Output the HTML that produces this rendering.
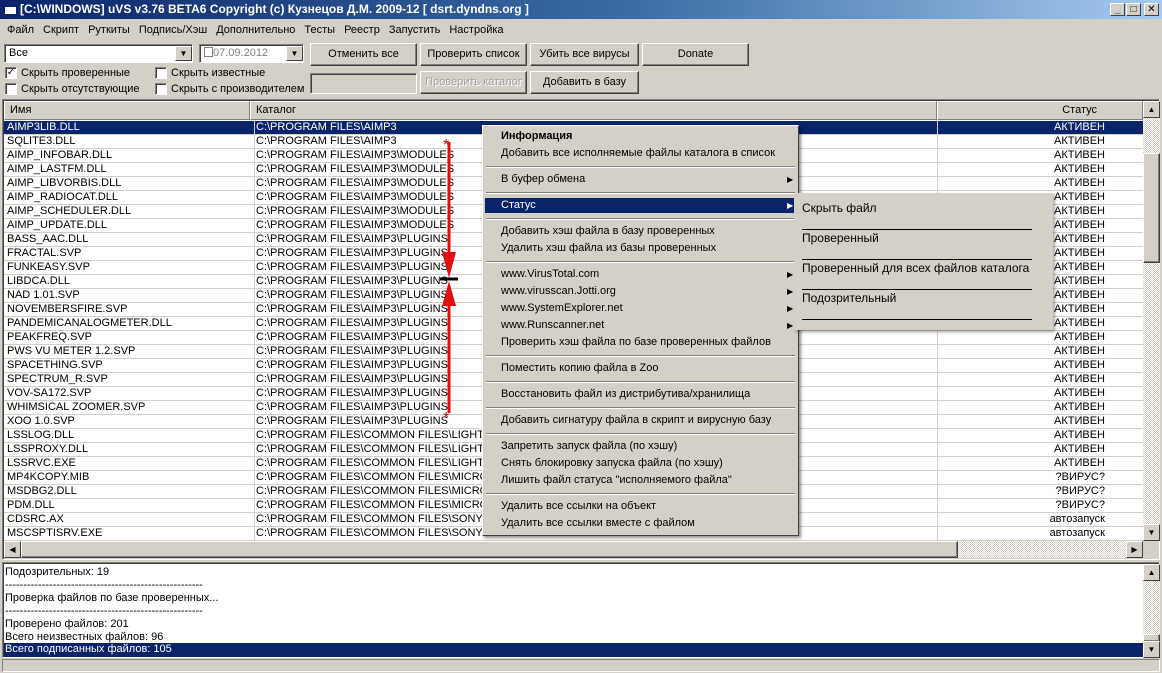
<!DOCTYPE html>
<html><head><meta charset="utf-8"><style>
*{box-sizing:border-box;margin:0;padding:0}
body{width:1162px;height:673px;overflow:hidden;background:#d4d0c8;font-family:"Liberation Sans","DejaVu Sans",sans-serif;font-size:11px;color:#000;position:relative}
.a{position:absolute}
.title{left:0;top:0;width:1162px;height:19px;background:linear-gradient(90deg,#0a246a 0%,#3a6ea5 55%,#a6caf0 100%);color:#fff;font-weight:bold;font-size:12px;line-height:19px;padding-left:20px;white-space:nowrap}
.tb{top:3px;width:15px;height:13px;background:#d4d0c8;border:1px solid;border-color:#fff #404040 #404040 #fff;font-size:10px;line-height:11px;text-align:center;font-weight:bold;color:#000}
.menu span{margin-right:9px}
.btn{height:23px;background:#d4d0c8;border:1px solid;border-color:#fff #404040 #404040 #fff;box-shadow:inset -1px -1px #808080;text-align:center;line-height:21px;white-space:nowrap}
.sunk{border:1px solid;border-color:#808080 #fff #fff #808080;box-shadow:inset 1px 1px #404040;background:#fff}
.cb{width:12px;height:12px;background:#fff;border:1px solid;border-color:#808080 #fff #fff #808080;box-shadow:inset 1px 1px #404040;font-size:10px;line-height:10px;text-align:center}
.grid{left:4px;top:101px;width:1139px;height:440px;background:#fff;overflow:hidden}
.hdr{position:absolute;top:0;height:19px;background:#d4d0c8;border:1px solid;border-color:#fff #808080 #808080 #fff;line-height:17px;padding-left:5px}
.row{position:absolute;left:0;width:1139px;height:14px;border-bottom:1px solid #d4d0c8;line-height:13px;white-space:nowrap}
.row div{position:absolute;top:0;height:14px;overflow:hidden}
.c1{left:3px;width:243px}.c2{left:250px;width:680px;border-left:1px solid #d4d0c8;padding-left:1px}.c3{left:933px;width:206px;border-left:1px solid #d4d0c8;text-align:right;padding-right:38px}
.sel{background:#0a246a;color:#fff}
.sb{background:repeating-conic-gradient(#d4d0c8 0 25%,#fff 0 50%) 0 0/2px 2px}
.arr{width:17px;height:17px;background:#d4d0c8;border:1px solid;border-color:#fff #404040 #404040 #fff;font-size:8px;line-height:15px;text-align:center}
.cm{left:482px;top:125px;width:317px;height:411px;background:#d4d0c8;border:1px solid;border-color:#fff #404040 #404040 #fff;box-shadow:2px 2px 3px rgba(0,0,0,.45)}
.mi{position:absolute;left:18px;white-space:nowrap;height:17px;line-height:17px}
.sep{position:absolute;left:3px;width:309px;height:2px;border-top:1px solid #808080;border-bottom:1px solid #fff}
.tri{position:absolute;left:304px;font-size:8px}
.sub{left:794px;top:193px;width:259px;height:137px;background:#d4d0c8;box-shadow:2px 2px 3px rgba(0,0,0,.35)}
.sub .mi{left:8px;font-size:12px}
.sub .ln{position:absolute;left:8px;width:230px;height:1px;background:#000}
</style></head><body>
<div class="a title"><span class="a" style="left:4px;top:4px;width:13px;height:11px;background:#fff;border:1px solid #0a246a;border-top:3px solid #0a246a"></span>[C:\WINDOWS] uVS v3.76 BETA6 Copyright (c) Кузнецов Д.М. 2009-12 [ dsrt.dyndns.org ]</div>
<div class="a tb" style="left:1110px">_</div><div class="a tb" style="left:1126px">□</div><div class="a tb" style="left:1144px">✕</div>
<div class="a menu" style="left:7px;top:24px;white-space:nowrap"><span>Файл</span><span>Скрипт</span><span>Руткиты</span><span>Подпись/Хэш</span><span>Дополнительно</span><span>Тесты</span><span>Реестр</span><span>Запустить</span><span>Настройка</span></div>
<div class="a sunk" style="left:4px;top:44px;width:189px;height:19px;padding:2px 4px">Все</div>
<div class="a arr" style="left:175px;top:46px;height:15px;line-height:13px">▼</div>
<div class="a sunk" style="left:199px;top:44px;width:105px;height:19px;padding:2px 4px;color:#808080"><span style="display:inline-block;width:9px;height:10px;border:1px solid #808080;vertical-align:-1px"></span>07.09.2012</div>
<div class="a arr" style="left:286px;top:46px;height:15px;line-height:13px">▼</div>
<div class="a btn" style="left:310px;top:43px;width:107px">Отменить все</div>
<div class="a btn" style="left:420px;top:43px;width:107px">Проверить список</div>
<div class="a btn" style="left:530px;top:43px;width:109px">Убить все вирусы</div>
<div class="a btn" style="left:642px;top:43px;width:107px">Donate</div>
<div class="a cb" style="left:5px;top:67px">✓</div><div class="a" style="left:21px;top:67px">Скрыть проверенные</div>
<div class="a cb" style="left:155px;top:67px"></div><div class="a" style="left:171px;top:67px">Скрыть известные</div>
<div class="a cb" style="left:5px;top:83px"></div><div class="a" style="left:21px;top:83px">Скрыть отсутствующие</div>
<div class="a cb" style="left:155px;top:83px"></div><div class="a" style="left:171px;top:83px">Скрыть с производителем</div>
<div class="a" style="left:310px;top:73px;width:107px;height:21px;border:1px solid;border-color:#808080 #fff #fff #808080;box-shadow:inset 1px 1px #404040"></div>
<div class="a btn" style="left:420px;top:71px;width:107px;color:#a0a0a0;text-shadow:1px 1px #fff">Проверить каталог</div>
<div class="a btn" style="left:530px;top:71px;width:109px">Добавить в базу</div>
<div class="a" style="left:2px;top:99px;width:1158px;height:461px;border:1px solid;border-color:#808080 #fff #fff #808080;box-shadow:inset 1px 1px #404040"></div>
<div class="a grid">
<div class="hdr" style="left:0;width:246px">Имя</div>
<div class="hdr" style="left:246px;width:687px">Каталог</div>
<div class="hdr" style="left:933px;width:206px;text-align:right;padding-right:45px">Статус</div>
<div style="position:absolute;left:0;top:1px;width:1139px;height:440px">
<div class="row sel" style="top:19px"><div class="c1">AIMP3LIB.DLL</div><div class="c2">C:\PROGRAM FILES\AIMP3</div><div class="c3">АКТИВЕН</div></div>
<div class="row" style="top:33px"><div class="c1">SQLITE3.DLL</div><div class="c2">C:\PROGRAM FILES\AIMP3</div><div class="c3">АКТИВЕН</div></div>
<div class="row" style="top:47px"><div class="c1">AIMP_INFOBAR.DLL</div><div class="c2">C:\PROGRAM FILES\AIMP3\MODULES</div><div class="c3">АКТИВЕН</div></div>
<div class="row" style="top:61px"><div class="c1">AIMP_LASTFM.DLL</div><div class="c2">C:\PROGRAM FILES\AIMP3\MODULES</div><div class="c3">АКТИВЕН</div></div>
<div class="row" style="top:75px"><div class="c1">AIMP_LIBVORBIS.DLL</div><div class="c2">C:\PROGRAM FILES\AIMP3\MODULES</div><div class="c3">АКТИВЕН</div></div>
<div class="row" style="top:89px"><div class="c1">AIMP_RADIOCAT.DLL</div><div class="c2">C:\PROGRAM FILES\AIMP3\MODULES</div><div class="c3">АКТИВЕН</div></div>
<div class="row" style="top:103px"><div class="c1">AIMP_SCHEDULER.DLL</div><div class="c2">C:\PROGRAM FILES\AIMP3\MODULES</div><div class="c3">АКТИВЕН</div></div>
<div class="row" style="top:117px"><div class="c1">AIMP_UPDATE.DLL</div><div class="c2">C:\PROGRAM FILES\AIMP3\MODULES</div><div class="c3">АКТИВЕН</div></div>
<div class="row" style="top:131px"><div class="c1">BASS_AAC.DLL</div><div class="c2">C:\PROGRAM FILES\AIMP3\PLUGINS</div><div class="c3">АКТИВЕН</div></div>
<div class="row" style="top:145px"><div class="c1">FRACTAL.SVP</div><div class="c2">C:\PROGRAM FILES\AIMP3\PLUGINS</div><div class="c3">АКТИВЕН</div></div>
<div class="row" style="top:159px"><div class="c1">FUNKEASY.SVP</div><div class="c2">C:\PROGRAM FILES\AIMP3\PLUGINS</div><div class="c3">АКТИВЕН</div></div>
<div class="row" style="top:173px"><div class="c1">LIBDCA.DLL</div><div class="c2">C:\PROGRAM FILES\AIMP3\PLUGINS</div><div class="c3">АКТИВЕН</div></div>
<div class="row" style="top:187px"><div class="c1">NAD 1.01.SVP</div><div class="c2">C:\PROGRAM FILES\AIMP3\PLUGINS</div><div class="c3">АКТИВЕН</div></div>
<div class="row" style="top:201px"><div class="c1">NOVEMBERSFIRE.SVP</div><div class="c2">C:\PROGRAM FILES\AIMP3\PLUGINS</div><div class="c3">АКТИВЕН</div></div>
<div class="row" style="top:215px"><div class="c1">PANDEMICANALOGMETER.DLL</div><div class="c2">C:\PROGRAM FILES\AIMP3\PLUGINS</div><div class="c3">АКТИВЕН</div></div>
<div class="row" style="top:229px"><div class="c1">PEAKFREQ.SVP</div><div class="c2">C:\PROGRAM FILES\AIMP3\PLUGINS</div><div class="c3">АКТИВЕН</div></div>
<div class="row" style="top:243px"><div class="c1">PWS VU METER 1.2.SVP</div><div class="c2">C:\PROGRAM FILES\AIMP3\PLUGINS</div><div class="c3">АКТИВЕН</div></div>
<div class="row" style="top:257px"><div class="c1">SPACETHING.SVP</div><div class="c2">C:\PROGRAM FILES\AIMP3\PLUGINS</div><div class="c3">АКТИВЕН</div></div>
<div class="row" style="top:271px"><div class="c1">SPECTRUM_R.SVP</div><div class="c2">C:\PROGRAM FILES\AIMP3\PLUGINS</div><div class="c3">АКТИВЕН</div></div>
<div class="row" style="top:285px"><div class="c1">VOV-SA172.SVP</div><div class="c2">C:\PROGRAM FILES\AIMP3\PLUGINS</div><div class="c3">АКТИВЕН</div></div>
<div class="row" style="top:299px"><div class="c1">WHIMSICAL ZOOMER.SVP</div><div class="c2">C:\PROGRAM FILES\AIMP3\PLUGINS</div><div class="c3">АКТИВЕН</div></div>
<div class="row" style="top:313px"><div class="c1">XOO 1.0.SVP</div><div class="c2">C:\PROGRAM FILES\AIMP3\PLUGINS</div><div class="c3">АКТИВЕН</div></div>
<div class="row" style="top:327px"><div class="c1">LSSLOG.DLL</div><div class="c2">C:\PROGRAM FILES\COMMON FILES\LIGHTSCRIBE</div><div class="c3">АКТИВЕН</div></div>
<div class="row" style="top:341px"><div class="c1">LSSPROXY.DLL</div><div class="c2">C:\PROGRAM FILES\COMMON FILES\LIGHTSCRIBE</div><div class="c3">АКТИВЕН</div></div>
<div class="row" style="top:355px"><div class="c1">LSSRVC.EXE</div><div class="c2">C:\PROGRAM FILES\COMMON FILES\LIGHTSCRIBE</div><div class="c3">АКТИВЕН</div></div>
<div class="row" style="top:369px"><div class="c1">MP4KCOPY.MIB</div><div class="c2">C:\PROGRAM FILES\COMMON FILES\MICROSOFT SHARED</div><div class="c3">?ВИРУС?</div></div>
<div class="row" style="top:383px"><div class="c1">MSDBG2.DLL</div><div class="c2">C:\PROGRAM FILES\COMMON FILES\MICROSOFT SHARED</div><div class="c3">?ВИРУС?</div></div>
<div class="row" style="top:397px"><div class="c1">PDM.DLL</div><div class="c2">C:\PROGRAM FILES\COMMON FILES\MICROSOFT SHARED</div><div class="c3">?ВИРУС?</div></div>
<div class="row" style="top:411px"><div class="c1">CDSRC.AX</div><div class="c2">C:\PROGRAM FILES\COMMON FILES\SONY SHARED</div><div class="c3">автозапуск</div></div>
<div class="row" style="top:425px"><div class="c1">MSCSPTISRV.EXE</div><div class="c2">C:\PROGRAM FILES\COMMON FILES\SONY SHARED\AVLIB</div><div class="c3">автозапуск</div></div>
</div>
</div>
<!-- vertical scrollbar -->
<div class="a sb" style="left:1143px;top:101px;width:17px;height:440px"></div>
<div class="a arr" style="left:1143px;top:101px">▲</div>
<div class="a btn" style="left:1143px;top:153px;width:17px;height:110px"></div>
<div class="a arr" style="left:1143px;top:524px">▼</div>
<!-- horizontal scrollbar -->
<div class="a sb" style="left:4px;top:541px;width:1139px;height:17px"></div>
<div class="a arr" style="left:4px;top:541px">◀</div>
<div class="a btn" style="left:21px;top:541px;width:937px;height:17px"></div>
<div class="a arr" style="left:1126px;top:541px">▶</div>
<!-- log -->
<div class="a" style="left:2px;top:562px;width:1158px;height:96px;background:#fff;border:1px solid;border-color:#808080 #fff #fff #808080;box-shadow:inset 1px 1px #404040"></div>
<div class="a" style="left:5px;top:566px;line-height:13px;white-space:nowrap">Подозрительных: 19<br>------------------------------------------------------<br>Проверка файлов по базе проверенных...<br>------------------------------------------------------<br>Проверено файлов: 201<br>Всего неизвестных файлов: 96</div>
<div class="a sel" style="left:4px;top:643px;width:1139px;height:14px;line-height:13px;padding-left:1px">Всего подписанных файлов: 105</div>
<div class="a sb" style="left:1143px;top:564px;width:17px;height:93px"></div>
<div class="a arr" style="left:1143px;top:564px">▲</div>
<div class="a btn" style="left:1143px;top:634px;width:17px;height:8px"></div>
<div class="a arr" style="left:1143px;top:641px">▼</div>
<div class="a" style="left:2px;top:659px;width:1158px;height:13px;border:1px solid;border-color:#808080 #fff #fff #808080"></div>
<!-- red arrows -->
<svg class="a" style="left:430px;top:130px" width="40" height="295">
<line x1="19" y1="12" x2="19" y2="135" stroke="#e01010" stroke-width="3"/>
<polygon points="12,122 26,122 19,148" fill="#e01010"/>
<line x1="10" y1="149" x2="28" y2="149" stroke="#000" stroke-width="3"/>
<polygon points="12,176 26,176 19,151" fill="#e01010"/>
<line x1="19" y1="165" x2="19" y2="283" stroke="#e01010" stroke-width="3"/>
<text x="13" y="20" font-size="16" fill="#a01010" font-family="Liberation Sans">*</text>
<text x="13" y="293" font-size="16" fill="#a01010" font-family="Liberation Sans">*</text>
</svg>
<!-- context menu -->
<div class="a cm">
<div class="mi" style="top:2px;font-weight:bold">Информация</div>
<div class="mi" style="top:19px">Добавить все исполняемые файлы каталога в список</div>
<div class="sep" style="top:40px"></div>
<div class="mi" style="top:45px">В буфер обмена</div><div class="tri" style="top:49px">▶</div>
<div class="sep" style="top:66px"></div>
<div style="position:absolute;left:2px;top:72px;width:311px;height:15px;background:#0a246a"></div>
<div class="mi" style="top:71px;color:#fff">Статус</div><div class="tri" style="top:75px;color:#fff">▶</div>
<div class="sep" style="top:92px"></div>
<div class="mi" style="top:97px">Добавить хэш файла в базу проверенных</div>
<div class="mi" style="top:114px">Удалить хэш файла из базы проверенных</div>
<div class="sep" style="top:135px"></div>
<div class="mi" style="top:140px">www.VirusTotal.com</div><div class="tri" style="top:144px">▶</div>
<div class="mi" style="top:157px">www.virusscan.Jotti.org</div><div class="tri" style="top:161px">▶</div>
<div class="mi" style="top:174px">www.SystemExplorer.net</div><div class="tri" style="top:178px">▶</div>
<div class="mi" style="top:191px">www.Runscanner.net</div><div class="tri" style="top:195px">▶</div>
<div class="mi" style="top:208px">Проверить хэш файла по базе проверенных файлов</div>
<div class="sep" style="top:229px"></div>
<div class="mi" style="top:234px">Поместить копию файла в Zoo</div>
<div class="sep" style="top:255px"></div>
<div class="mi" style="top:260px">Восстановить файл из дистрибутива/хранилища</div>
<div class="sep" style="top:281px"></div>
<div class="mi" style="top:286px">Добавить сигнатуру файла в скрипт и вирусную базу</div>
<div class="sep" style="top:307px"></div>
<div class="mi" style="top:312px">Запретить запуск файла (по хэшу)</div>
<div class="mi" style="top:329px">Снять блокировку запуска файла (по хэшу)</div>
<div class="mi" style="top:346px">Лишить файл статуса "исполняемого файла"</div>
<div class="sep" style="top:367px"></div>
<div class="mi" style="top:372px">Удалить все ссылки на объект</div>
<div class="mi" style="top:389px">Удалить все ссылки вместе с файлом</div>
</div>
<div class="a sub">
<div class="mi" style="top:7px">Скрыть файл</div>
<div class="ln" style="top:36px"></div>
<div class="mi" style="top:37px">Проверенный</div>
<div class="ln" style="top:66px"></div>
<div class="mi" style="top:67px">Проверенный для всех файлов каталога</div>
<div class="ln" style="top:96px"></div>
<div class="mi" style="top:97px">Подозрительный</div>
<div class="ln" style="top:126px"></div>
</div>
</body></html>
